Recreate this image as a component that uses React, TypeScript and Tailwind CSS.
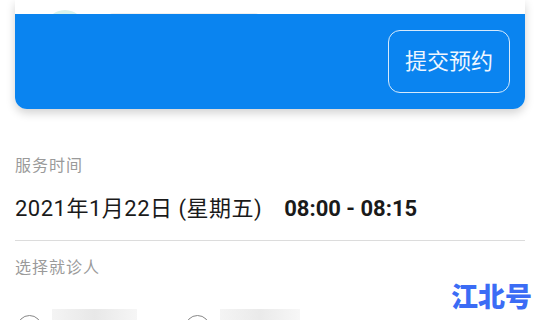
export default function App() {
  return (
    <div
      className="relative w-[540px] h-[320px] overflow-hidden bg-white"
      style={{ fontFamily: 'Roboto, "Noto Sans CJK SC", sans-serif' }}
    >
      {/* card */}
      <div className="mx-[15px] rounded-b-[12px] shadow-[0_4px_10px_rgba(0,0,0,0.18)] overflow-hidden">
        <div className="h-[14px] bg-white flex items-end gap-6 pl-[30px] overflow-hidden">
          <div className="w-[40px] h-[40px] rounded-full bg-[#d8f2ec] -mb-[36px] shrink-0" />
          <div className="w-[150px] h-[10px] bg-[#f0f0f0] -mb-[9px] rounded" />
        </div>
        <div className="h-[95px] bg-[#0a84f0] flex items-center justify-end pr-[15px]">
          <button className="w-[122px] h-[63px] rounded-[12px] border-[1.5px] border-[#d6eafc] text-[#eef6ff] text-[22px] leading-none">
            提交预约
          </button>
        </div>
      </div>

      <div className="px-[15px]">
        <div className="mt-[46px] text-[16px] leading-[22px] text-[#9a9a9a] tracking-[1px]">服务时间</div>
        <div className="mt-[18px] flex items-baseline text-[22px] leading-[28px] text-[#1a1a1a]">
          <span className="tracking-[0.5px]">2021年1月22日 (星期五)</span>
          <span className="ml-[22px] font-bold">08:00 - 08:15</span>
        </div>
        <div className="mt-[17px] h-px bg-[#dcdcdc]" />
        <div className="mt-[16px] text-[16px] leading-[22px] text-[#9a9a9a] tracking-[1px]">选择就诊人</div>
        <div className="mt-[36px] flex items-start">
          <div className="ml-[2px] w-[25px] h-[25px] rounded-full border-[1.5px] border-[#888]" />
          <div className="ml-[10px] mt-[-6px] w-[85px] h-[20px] bg-gradient-to-r from-[#f4f4f4] via-[#e8e8e8] to-[#f6f6f6]" />
          <div className="ml-[48px] w-[25px] h-[25px] rounded-full border-[1.5px] border-[#888]" />
          <div className="ml-[10px] mt-[-6px] w-[80px] h-[20px] bg-gradient-to-r from-[#f4f4f4] via-[#eaeaea] to-[#f7f7f7]" />
        </div>
      </div>

      <div className="absolute right-[8px] top-[285px] text-[27px] leading-none font-black text-[#3b6cf5]">
        江北号
      </div>
    </div>
  );
}
